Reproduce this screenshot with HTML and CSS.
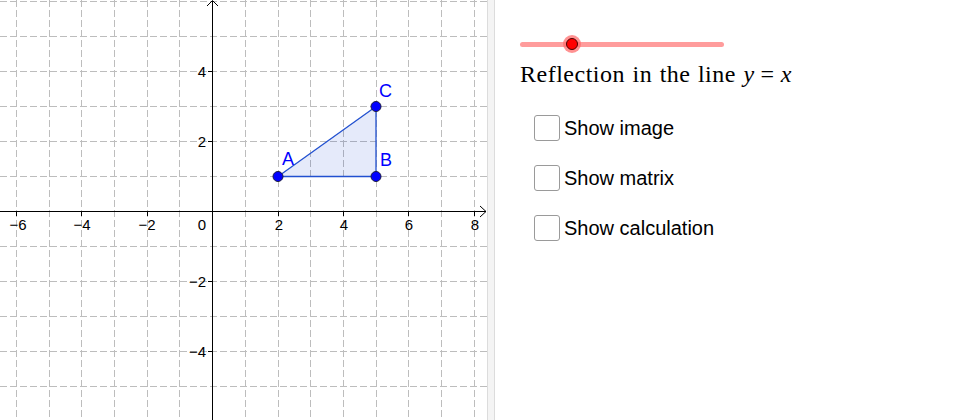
FILE: index.html
```html
<!DOCTYPE html>
<html>
<head>
<meta charset="utf-8">
<link rel="stylesheet" href="styles.css">
</head>
<body>
<div class="app">
  <div class="graphics">
    <svg class="plot" width="487" height="420" viewBox="0 0 487 420" xmlns="http://www.w3.org/2000/svg">
      <g class="grid">
        <line x1="16.5" y1="0" x2="16.5" y2="420"/>
        <line x1="49.5" y1="0" x2="49.5" y2="420"/>
        <line x1="81.5" y1="0" x2="81.5" y2="420"/>
        <line x1="114.5" y1="0" x2="114.5" y2="420"/>
        <line x1="147.5" y1="0" x2="147.5" y2="420"/>
        <line x1="179.5" y1="0" x2="179.5" y2="420"/>
        <line x1="245.5" y1="0" x2="245.5" y2="420"/>
        <line x1="278.5" y1="0" x2="278.5" y2="420"/>
        <line x1="310.5" y1="0" x2="310.5" y2="420"/>
        <line x1="343.5" y1="0" x2="343.5" y2="420"/>
        <line x1="376.5" y1="0" x2="376.5" y2="420"/>
        <line x1="408.5" y1="0" x2="408.5" y2="420"/>
        <line x1="441.5" y1="0" x2="441.5" y2="420"/>
        <line x1="474.5" y1="0" x2="474.5" y2="420"/>
        <line x1="0" y1="1.5" x2="487" y2="1.5"/>
        <line x1="0" y1="36.5" x2="487" y2="36.5"/>
        <line x1="0" y1="71.5" x2="487" y2="71.5"/>
        <line x1="0" y1="106.5" x2="487" y2="106.5"/>
        <line x1="0" y1="141.5" x2="487" y2="141.5"/>
        <line x1="0" y1="176.5" x2="487" y2="176.5"/>
        <line x1="0" y1="246.5" x2="487" y2="246.5"/>
        <line x1="0" y1="281.5" x2="487" y2="281.5"/>
        <line x1="0" y1="316.5" x2="487" y2="316.5"/>
        <line x1="0" y1="351.5" x2="487" y2="351.5"/>
        <line x1="0" y1="386.5" x2="487" y2="386.5"/>
      </g>
      <g class="axes">
        <line x1="0" y1="211.5" x2="486" y2="211.5"/>
        <line x1="212.5" y1="1" x2="212.5" y2="420"/>
        <polyline points="480,206 486,211.5 480,217"/>
        <polyline points="207,6 212.5,0.5 218,6"/>
        <line x1="16.5" y1="211.5" x2="16.5" y2="216"/>
        <line x1="81.5" y1="211.5" x2="81.5" y2="216"/>
        <line x1="147.5" y1="211.5" x2="147.5" y2="216"/>
        <line x1="278.5" y1="211.5" x2="278.5" y2="216"/>
        <line x1="343.5" y1="211.5" x2="343.5" y2="216"/>
        <line x1="408.5" y1="211.5" x2="408.5" y2="216"/>
        <line x1="474.5" y1="211.5" x2="474.5" y2="216"/>
        <line x1="208" y1="71.5" x2="212.5" y2="71.5"/>
        <line x1="208" y1="141.5" x2="212.5" y2="141.5"/>
        <line x1="208" y1="281.5" x2="212.5" y2="281.5"/>
        <line x1="208" y1="351.5" x2="212.5" y2="351.5"/>
      </g>
      <g class="ticklabels">
        <text x="18" y="230" text-anchor="middle">−6</text>
        <text x="82" y="230" text-anchor="middle">−4</text>
        <text x="147" y="230" text-anchor="middle">−2</text>
        <text x="206" y="230" text-anchor="end">0</text>
        <text x="279" y="230" text-anchor="middle">2</text>
        <text x="344" y="230" text-anchor="middle">4</text>
        <text x="409" y="230" text-anchor="middle">6</text>
        <text x="475" y="230" text-anchor="middle">8</text>
        <text x="206" y="77" text-anchor="end">4</text>
        <text x="206" y="147" text-anchor="end">2</text>
        <text x="206" y="287" text-anchor="end">−2</text>
        <text x="206" y="357" text-anchor="end">−4</text>
      </g>
      <polygon class="tri" points="278,176.5 376,176.5 376,106.5"/>
      <g class="edges">
        <line x1="278" y1="176.5" x2="376" y2="176.5"/>
        <line x1="376" y1="176.5" x2="376" y2="106.5"/>
        <line x1="376" y1="106.5" x2="278" y2="176.5"/>
      </g>
      <g class="pts">
        <circle cx="278" cy="176.5" r="5"/>
        <circle cx="376" cy="176.5" r="5"/>
        <circle cx="376" cy="106.5" r="5"/>
      </g>
      <g class="ptlabels">
        <text x="282" y="165">A</text>
        <text x="380" y="166">B</text>
        <text x="379" y="97">C</text>
      </g>
    </svg>
  </div>
  <div class="divider"></div>
  <div class="panel">
    <div class="slider">
      <div class="track"></div>
      <div class="knob"></div>
    </div>
    <div class="caption">Reflection in the line <span class="mi">y</span><span class="mo">=</span><span class="mi">x</span></div>
    <ul class="checks">
      <li class="check"><span class="box"></span><span class="label">Show image</span></li>
      <li class="check"><span class="box"></span><span class="label">Show matrix</span></li>
      <li class="check"><span class="box"></span><span class="label">Show calculation</span></li>
    </ul>
  </div>
</div>
</body>
</html>
```
FILE: styles.css
```css
html, body {
  margin: 0;
  padding: 0;
  background: #ffffff;
}

.app {
  display: flex;
  width: 980px;
  height: 420px;
  overflow: hidden;
}

.graphics {
  width: 487px;
  height: 420px;
  flex: none;
}

.plot {
  display: block;
}

.grid line {
  stroke: #bdbdbd;
  stroke-width: 1;
  stroke-dasharray: 7 3;
}

.axes line,
.axes polyline {
  stroke: #000000;
  stroke-width: 1;
  fill: none;
}

.ticklabels text {
  font-family: "Liberation Sans", Arial, sans-serif;
  font-size: 15px;
  fill: #000000;
}

.tri {
  fill: #0033cc;
  fill-opacity: 0.1;
  stroke: none;
}

.edges line {
  stroke: #2150d0;
  stroke-width: 1.3;
}

.pts circle {
  fill: #0000ff;
  stroke: #1a1a40;
  stroke-width: 1;
}

.ptlabels text {
  font-family: "Liberation Sans", Arial, sans-serif;
  font-size: 18px;
  fill: #0000ff;
}

.divider {
  width: 6px;
  flex: none;
  background: #f4f4f4;
  border-left: 1px solid #dcdcdc;
  border-right: 1px solid #dcdcdc;
}

.panel {
  flex: 1;
  padding: 37px 0 0 25px;
}

.slider {
  position: relative;
  width: 204px;
  height: 14px;
}

.track {
  position: absolute;
  left: 0;
  right: 0;
  top: 5px;
  height: 5px;
  border-radius: 3px;
  background: #ff9c9c;
}

.knob {
  position: absolute;
  left: 46px;
  top: 1px;
  width: 10px;
  height: 10px;
  border-radius: 50%;
  background: #ff0000;
  border: 1px solid #4a0000;
  box-shadow: 0 0 0 3px rgba(255, 110, 110, 0.75);
}

.caption {
  margin-top: 8px;
  font-family: "Liberation Serif", "Times New Roman", serif;
  font-size: 24px;
  line-height: 30px;
  letter-spacing: 0.5px;
  word-spacing: 1px;
  color: #000000;
}

.mi {
  font-style: italic;
}

.mo {
  margin: 0 6px;
}

.checks {
  list-style: none;
  margin: 26px 0 0 14px;
  padding: 0;
  display: flex;
  flex-direction: column;
  gap: 24px;
}

.check {
  display: flex;
  align-items: center;
  height: 26px;
}

.box {
  width: 24px;
  height: 24px;
  border: 1px solid #9a9a9a;
  border-radius: 3px;
  background: #ffffff;
  box-sizing: content-box;
  margin-right: 4px;
}

.label {
  font-family: "Liberation Sans", Arial, sans-serif;
  font-size: 20px;
  color: #000000;
}
```
